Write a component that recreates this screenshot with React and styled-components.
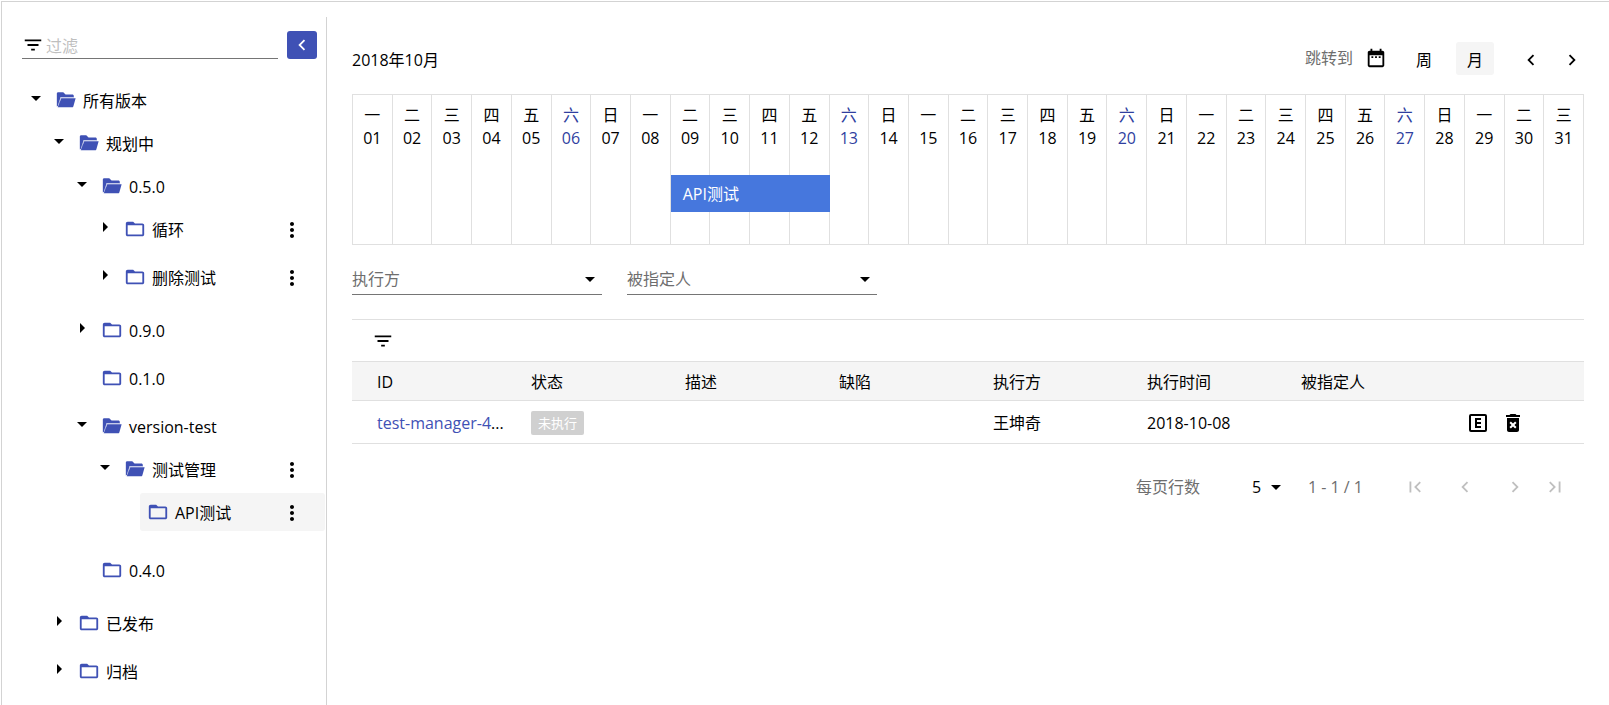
import React, { useState } from 'react';
import styled, { createGlobalStyle, css } from 'styled-components';

const GlobalStyle = createGlobalStyle`
  *, *::before, *::after { box-sizing: border-box; }
  body {
    margin: 0;
    background: #fff;
    color: #000;
    font: 16px/24px "Open Sans", "Noto Sans CJK SC", sans-serif;
  }
  button, input, select { font: inherit; color: inherit; }
`;

const primary = '#3f51b5';
const line = '#e0e0e0';
const frame = '#d3d3d3';
const muted = '#6e6e6e';

const icons = {
  filter: 'M10 18h4v-2h-4v2zM3 6v2h18V6H3zm3 7h12v-2H6v2z',
  left: 'M15.41 7.41L14 6l-6 6 6 6 1.41-1.41L10.83 12z',
  right: 'M10 6L8.59 7.41 13.17 12l-4.58 4.59L10 18l6-6z',
  first: 'M18.41 16.59L13.82 12l4.59-4.59L17 6l-6 6 6 6zM6 6h2v12H6z',
  last: 'M5.59 7.41L10.18 12l-4.59 4.59L7 18l6-6-6-6zM16 6h2v12h-2z',
  down: 'M7 10l5 5 5-5z',
  play: 'M10 17l5-5-5-5v10z',
  folder: 'M20 6h-8l-2-2H4c-1.1 0-2 .9-2 2v12c0 1.1.9 2 2 2h16c1.1 0 2-.9 2-2V8c0-1.1-.9-2-2-2zm0 12H4V8h16v10z',
  more: 'M12 8c1.1 0 2-.9 2-2s-.9-2-2-2-2 .9-2 2 .9 2 2 2zm0 2c-1.1 0-2 .9-2 2s.9 2 2 2 2-.9 2-2-.9-2-2-2zm0 6c-1.1 0-2 .9-2 2s.9 2 2 2 2-.9 2-2-.9-2-2-2z',
  date: 'M8 10H7v2h2v-2H8zm3 0v2h2v-2h-2zm4 0v2h2v-2h-2zM19 4h-1V2h-2v2H8V2H6v2H5c-1.110 0-2 .9-2 2v14c0 1.100.890 2 2 2h14c1.100 0 2-.9 2-2V6c0-1.100-.9-2-2-2zm0 16H5V9h14v11z',
  remove: 'M6 19c0 1.1.9 2 2 2h8c1.1 0 2-.9 2-2V7H6v12zm2.46-7.12l1.41-1.41L12 12.59l2.12-2.12 1.41 1.41L13.41 14l2.12 2.12-1.41 1.41L12 15.41l-2.12 2.12-1.41-1.41L10.59 14l-2.13-2.12zM15.5 4l-1-1h-5l-1 1H5v2h14V4z',
};

const Svg = styled.svg`
  display: block;
  flex: none;
  width: ${p => p.$size}px;
  height: ${p => p.$size}px;
  fill: currentColor;
`;
const Icon = ({ name, size = 24 }) => (
  <Svg viewBox="0 0 24 24" $size={size} aria-hidden="true"><path d={icons[name]} /></Svg>
);
const OpenFolder = () => (
  <Svg viewBox="0 0 24 24" $size={22} aria-hidden="true">
    <path d="M2 19V5c0-.9.6-1.500 1.500-1.500H9L11.500 6H19c.9 0 1.500.6 1.500 1.500V9H6.200L4 18z" />
    <path d="M6.200 8.600h14.600v1.200H6.200L4 18.500l-1-.5z" fill="#c5cbe9" />
    <path d="M6.800 10H22.500l-2.500 9c-.3.700-.8 1-1.500 1H3z" />
  </Svg>
);
const Execute = () => (
  <Svg viewBox="0 0 24 24" $size={24} aria-hidden="true">
    <path d="M19 3H5a2 2 0 0 0-2 2v14a2 2 0 0 0 2 2h14a2 2 0 0 0 2-2V5a2 2 0 0 0-2-2zm0 16H5V5h14v14z" />
    <path d="M9 7h6v2h-4v2h4v2h-4v2h4v2H9z" />
  </Svg>
);

const Page = styled.div`
  display: flex;
  min-height: 100vh;
  padding: 1px 0 0 1px;
`;
const Frame = styled.div`
  display: flex;
  flex: 1;
  min-width: 0;
  padding-top: 15px;
  border: solid ${frame};
  border-width: 1px 0 0 1px;
`;
const Sidebar = styled.aside`
  flex: 0 0 325px;
  border-right: 1px solid ${frame};
`;
const Content = styled.main`
  flex: 1;
  min-width: 0;
  padding: 25px 25px 0;
`;

const FilterRow = styled.div`
  display: flex;
  align-items: stretch;
  gap: 9px;
  height: 28px;
  margin: 14px 9px 17px 20px;
`;
const FilterField = styled.label`
  display: flex;
  align-items: center;
  flex: 1;
  gap: 2px;
  min-width: 0;
  border-bottom: 1px solid #757575;
`;
const FilterInput = styled.input`
  flex: 1;
  min-width: 0;
  padding: 2px 0 0;
  border: 0;
  outline: 0;
  background: none;
  &::placeholder { color: #bfbfbf; opacity: 1; }
`;
const CollapseButton = styled.button`
  display: grid;
  place-items: center;
  width: 30px;
  padding: 0;
  border: 0;
  border-radius: 3px;
  background: ${primary};
  color: #fff;
`;

const Tree = styled.ul`
  margin: 0;
  padding: 0 1px 0 22px;
  list-style: none;
`;
const Branch = styled.ul`
  margin: 0;
  padding: 0 0 0 23px;
  list-style: none;
`;
const TreeItem = styled.li`
  padding: 5px 0;
`;
const TreeRow = styled.div`
  display: flex;
  height: 38px;
`;
const IconButton = styled.button`
  display: grid;
  place-items: center;
  flex: none;
  width: 24px;
  height: 24px;
  padding: 0;
  border: 0;
  background: none;
`;
const ToggleSlot = styled.div`
  width: 24px;
  flex: none;
  padding-top: 5px;
`;
const Node = styled.div`
  display: flex;
  align-items: center;
  flex: 1;
  min-width: 0;
  padding: 2px 21px 0 7px;
  border-radius: 3px;
  background: ${p => (p.$selected ? '#f5f5f5' : 'none')};
`;
const FolderMark = styled.span`
  padding-bottom: 3px;
  margin-right: 6px;
  color: ${primary};
`;
const NodeName = styled.span`
  flex: 1;
`;

const tree = [
  { name: '所有版本', open: true, children: [
    { name: '规划中', open: true, children: [
      { name: '0.5.0', open: true, children: [
        { name: '循环', menu: true, toggle: true },
        { name: '删除测试', menu: true, toggle: true },
      ] },
      { name: '0.9.0', toggle: true },
      { name: '0.1.0' },
      { name: 'version-test', open: true, children: [
        { name: '测试管理', menu: true, open: true, children: [
          { name: 'API测试', menu: true, selected: true },
        ] },
      ] },
      { name: '0.4.0' },
    ] },
    { name: '已发布', toggle: true },
    { name: '归档', toggle: true },
  ] },
];

const TreeNode = ({ node }) => (
  <TreeItem>
    <TreeRow>
      <ToggleSlot>
        {(node.toggle || node.open) && (
          <IconButton aria-label={node.open ? '收起' : '展开'}>
            <Icon name={node.open ? 'down' : 'play'} />
          </IconButton>
        )}
      </ToggleSlot>
      <Node $selected={node.selected}>
        <FolderMark>{node.open ? <OpenFolder /> : <Icon name="folder" size={22} />}</FolderMark>
        <NodeName>{node.name}</NodeName>
        {node.menu && <IconButton aria-label="更多"><Icon name="more" /></IconButton>}
      </Node>
    </TreeRow>
    {node.children && (
      <Branch>{node.children.map(c => <TreeNode key={c.name} node={c} />)}</Branch>
    )}
  </TreeItem>
);

const Header = styled.header`
  display: flex;
  align-items: center;
  justify-content: space-between;
  height: 33px;
  margin-bottom: 19px;
`;
const Title = styled.h1`
  margin: 0;
  padding-top: 2px;
  font-size: 16px;
  font-weight: 400;
`;
const Controls = styled.div`
  display: flex;
  align-items: center;
`;
const JumpLabel = styled.label`
  display: flex;
  align-items: center;
  gap: 11px;
  height: 32px;
  margin-right: 17px;
  align-self: flex-start;
  color: ${muted};
  button { color: #000; }
`;
const ViewButton = styled.button`
  width: 38px;
  height: 33px;
  margin-right: 13px;
  padding: 2px 0 0;
  border: 0;
  border-radius: 3px;
  background: ${p => (p.$active ? '#f5f5f5' : 'none')};
`;
const Arrows = styled.div`
  display: flex;
  gap: 17px;
  margin-left: 12px;
  padding-top: 2px;
`;

const Calendar = styled.section`
  display: grid;
  grid-template-columns: repeat(31, minmax(0, 1fr));
  grid-template-rows: 80px 37px 32px;
  border: solid ${line};
  border-width: 1px 0 1px 1px;
`;
const Day = styled.div`
  grid-area: 1 / ${p => p.$day} / 4 / auto;
  padding-top: 9px;
  border-right: 1px solid ${line};
  line-height: 23px;
  text-align: center;
  color: ${p => (p.$marked ? '#303f9f' : '#000')};
`;
const EventBar = styled.div`
  grid-area: 2 / ${p => p.$from} / auto / ${p => p.$to + 1};
  padding: 2px 12px 0;
  background: #4677dd;
  color: #fff;
  line-height: 35px;
`;

const Selects = styled.div`
  display: flex;
  gap: 25px;
  margin: 19px 0 24px;
`;
const SelectBox = styled.div`
  display: grid;
  align-items: center;
  > * { grid-area: 1 / 1; }
  > svg { justify-self: end; pointer-events: none; }
  select {
    width: 100%;
    height: 100%;
    padding: 0;
    border: 0;
    outline: 0;
    appearance: none;
    background: none;
  }
  ${p => (p.$wide ? css`
    width: 250px;
    height: 31px;
    border-bottom: 1px solid #757575;
    color: ${muted};
    > svg { color: #000; }
  ` : css`
    width: 36px;
    height: 24px;
  `)}
`;

const TableBar = styled.div`
  display: flex;
  align-items: center;
  height: 42px;
  padding-left: 19px;
  border-top: 1px solid ${line};
`;
const Table = styled.table`
  width: 100%;
  table-layout: fixed;
  border-collapse: separate;
  border-spacing: 0;
`;
const Th = styled.th`
  height: 40px;
  padding: 2px 0 0 25px;
  border: solid ${line};
  border-width: 1px 0;
  background: #f5f5f5;
  font-weight: 400;
  text-align: left;
`;
const Td = styled.td`
  height: 43px;
  padding: 2px 0 0 25px;
  border-bottom: 1px solid ${line};
  white-space: nowrap;
`;
const IssueLink = styled.a`
  color: ${primary};
  text-decoration: none;
`;
const Badge = styled.span`
  display: block;
  width: 53px;
  border-radius: 2px;
  background: #d0d0d0;
  color: #fff;
  font-size: 13px;
  text-align: center;
`;
const Actions = styled.div`
  display: flex;
  gap: 11px;
  padding-left: 11px;
`;

const Pagination = styled.nav`
  display: flex;
  align-items: center;
  justify-content: flex-end;
  height: 36px;
  margin-top: 25px;
  padding-right: 17px;
  color: ${muted};
`;
const PageSize = styled.label`
  display: flex;
  gap: 52px;
  margin-right: 20px;
  select, svg { color: #000; }
`;
const Pager = styled.div`
  display: flex;
  gap: 26px;
  margin-left: 40px;
  button { color: #bfbfbf; }
  button:last-child { margin-left: -10px; }
`;

const weekdays = '一二三四五六日';
const days = Array.from({ length: 31 }, (_, i) => i + 1);
const columns = ['ID', '状态', '描述', '缺陷', '执行方', '执行时间', '被指定人', ''];

export default function App() {
  const [view, setView] = useState('月');
  return (
    <>
      <GlobalStyle />
      <Page>
        <Frame>
          <Sidebar>
            <FilterRow>
              <FilterField>
                <Icon name="filter" size={22} />
                <FilterInput placeholder="过滤" aria-label="过滤" />
              </FilterField>
              <CollapseButton aria-label="收起侧栏"><Icon name="left" size={22} /></CollapseButton>
            </FilterRow>
            <Tree>{tree.map(n => <TreeNode key={n.name} node={n} />)}</Tree>
          </Sidebar>
          <Content>
            <Header>
              <Title>2018年10月</Title>
              <Controls>
                <JumpLabel>
                  跳转到
                  <IconButton aria-label="选择日期"><Icon name="date" size={22} /></IconButton>
                </JumpLabel>
                {['周', '月'].map(v => (
                  <ViewButton key={v} $active={view === v} onClick={() => setView(v)}>{v}</ViewButton>
                ))}
                <Arrows>
                  <IconButton aria-label="上一页"><Icon name="left" size={22} /></IconButton>
                  <IconButton aria-label="下一页"><Icon name="right" size={22} /></IconButton>
                </Arrows>
              </Controls>
            </Header>
            <Calendar>
              {days.map(d => (
                <Day key={d} $day={d} $marked={d % 7 === 6}>
                  <div>{weekdays[(d - 1) % 7]}</div>
                  <div>{String(d).padStart(2, '0')}</div>
                </Day>
              ))}
              <EventBar $from={9} $to={12}>API测试</EventBar>
            </Calendar>
            <Selects>
              {['执行方', '被指定人'].map(s => (
                <SelectBox key={s} $wide>
                  <select aria-label={s}><option>{s}</option></select>
                  <Icon name="down" />
                </SelectBox>
              ))}
            </Selects>
            <TableBar>
              <IconButton aria-label="筛选"><Icon name="filter" size={22} /></IconButton>
            </TableBar>
            <Table>
              <thead>
                <tr>{columns.map(c => <Th key={c} scope="col">{c}</Th>)}</tr>
              </thead>
              <tbody>
                <tr>
                  <Td><IssueLink href="#issue">test-manager-4</IssueLink>...</Td>
                  <Td><Badge>未执行</Badge></Td>
                  <Td />
                  <Td />
                  <Td>王坤奇</Td>
                  <Td>2018-10-08</Td>
                  <Td />
                  <Td>
                    <Actions>
                      <IconButton aria-label="执行"><Execute /></IconButton>
                      <IconButton aria-label="删除"><Icon name="remove" /></IconButton>
                    </Actions>
                  </Td>
                </tr>
              </tbody>
            </Table>
            <Pagination aria-label="分页">
              <PageSize>
                每页行数
                <SelectBox>
                  <select><option>5</option></select>
                  <Icon name="down" />
                </SelectBox>
              </PageSize>
              <span>1 - 1 / 1</span>
              <Pager>
                <IconButton aria-label="首页"><Icon name="first" size={22} /></IconButton>
                <IconButton aria-label="上一页"><Icon name="left" size={22} /></IconButton>
                <IconButton aria-label="下一页"><Icon name="right" size={22} /></IconButton>
                <IconButton aria-label="末页"><Icon name="last" size={22} /></IconButton>
              </Pager>
            </Pagination>
          </Content>
        </Frame>
      </Page>
    </>
  );
}
